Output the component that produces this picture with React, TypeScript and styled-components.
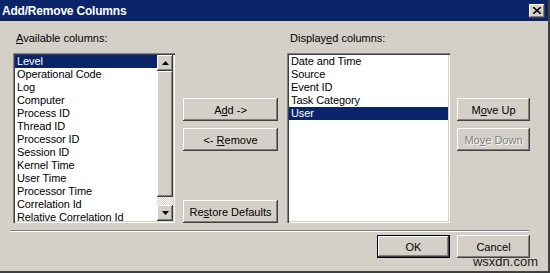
import React from 'react';
import styled, { createGlobalStyle, css } from 'styled-components';

const GlobalStyle = createGlobalStyle`
  html, body {
    margin: 0;
    padding: 0;
    background: #d4d0c8;
  }
  body {
    font-family: "Liberation Sans", Arial, sans-serif;
    font-size: 11px;
    color: #000;
  }
`;

const Window = styled.div`
  position: relative;
  width: 550px;
  height: 273px;
  box-sizing: border-box;
  background: #d4d0c8;
  border-right: 2px solid #404040;
  border-bottom: 2px solid #404040;
  display: flex;
  flex-direction: column;
`;

const TitleBar = styled.div`
  height: 21px;
  background: #0a246a;
  display: flex;
  align-items: center;
  justify-content: space-between;
  padding: 0 3px 0 2px;
`;

const Title = styled.span`
  color: #fff;
  font-weight: bold;
  font-size: 12px;
  letter-spacing: -0.2px;
`;

const CloseButton = styled.div`
  width: 16px;
  height: 14px;
  background: #d4d0c8;
  box-shadow: inset -1px -1px #404040, inset 1px 1px #fff, inset -2px -2px #808080;
  display: flex;
  align-items: center;
  justify-content: center;
`;

const Body = styled.div`
  display: flex;
  padding: 11px 0 0 13px;
`;

const Column = styled.div<{ $width: number; $gap?: number }>`
  width: ${p => p.$width}px;
  margin-right: ${p => p.$gap ?? 0}px;
  display: flex;
  flex-direction: column;
`;

const Label = styled.div`
  height: 13px;
  line-height: 13px;
  margin: 0 0 8px 3px;
  white-space: nowrap;
`;

const ListBox = styled.div`
  height: 170px;
  box-sizing: border-box;
  background: #fff;
  box-shadow: inset 1px 1px #808080, inset 2px 2px #404040, inset -1px -1px #fff, inset -2px -2px #d4d0c8;
  padding: 2px;
  display: flex;
`;

const Items = styled.div`
  flex: 1;
  min-width: 0;
`;

const Item = styled.div<{ $selected?: boolean }>`
  height: 13px;
  line-height: 13px;
  padding-left: 2px;
  white-space: nowrap;
  overflow: hidden;
  letter-spacing: -0.1px;
  ${p =>
    p.$selected &&
    css`
      background: #0a246a;
      color: #fff;
    `}
`;

const ScrollBar = styled.div`
  width: 16px;
  display: flex;
  flex-direction: column;
`;

const raised = css`
  background: #d4d0c8;
  box-shadow: inset -1px -1px #404040, inset 1px 1px #fff, inset -2px -2px #808080, inset 2px 2px #d4d0c8;
`;

const ArrowButton = styled.div`
  ${raised};
  height: 16px;
  display: flex;
  align-items: center;
  justify-content: center;
`;

const Thumb = styled.div`
  ${raised};
  height: 126px;
`;

const Track = styled.div`
  flex: 1;
  background-color: #fff;
  background-image: repeating-conic-gradient(#d4d0c8 0 25%, #fff 0 50%);
  background-size: 2px 2px;
`;

const PushButton = styled.button<{ $default?: boolean }>`
  ${raised};
  width: 100%;
  height: 23px;
  border: none;
  padding: 0;
  font-family: inherit;
  font-size: 11px;
  color: #000;
  box-sizing: border-box;
  ${p =>
    p.$default &&
    css`
      box-shadow: inset 0 0 0 1px #000, inset -2px -2px #404040, inset 2px 2px #fff, inset -3px -3px #808080;
    `}
  &:disabled {
    color: #808080;
    text-shadow: 1px 1px #fff;
  }
`;

const MiddleButtons = styled.div`
  display: flex;
  flex-direction: column;
  gap: 7px;
  margin-top: 66px;
`;

const Spacer = styled.div`
  flex: 1;
`;

const Separator = styled.div`
  margin: 7px 19px 0 10px;
  height: 0;
  border-top: 1px solid #808080;
  border-bottom: 1px solid #fff;
`;

const Footer = styled.div`
  display: flex;
  justify-content: flex-end;
  gap: 7px;
  padding: 3px 18px 0 0;
`;

const FooterSlot = styled.div`
  width: 73px;
`;

const Watermark = styled.div`
  position: absolute;
  right: 10px;
  bottom: 2px;
  font-size: 13px;
  color: #1a1a1a;
`;

const Key = styled.u``;

const available = [
  'Level',
  'Operational Code',
  'Log',
  'Computer',
  'Process ID',
  'Thread ID',
  'Processor ID',
  'Session ID',
  'Kernel Time',
  'User Time',
  'Processor Time',
  'Correlation Id',
  'Relative Correlation Id'
];

const displayed = ['Date and Time', 'Source', 'Event ID', 'Task Category', 'User'];

const Arrow = ({ up }: { up?: boolean }) => (
  <svg width="7" height="4" viewBox="0 0 7 4">
    <path d={up ? 'M3.5 0 L7 4 L0 4 Z' : 'M0 0 L7 0 L3.5 4 Z'} fill="#000" />
  </svg>
);

const App = () => (
  <>
    <GlobalStyle />
    <Window>
      <TitleBar>
        <Title>Add/Remove Columns</Title>
        <CloseButton>
          <svg width="8" height="7" viewBox="0 0 8 7">
            <path d="M0 0 L8 7 M8 0 L0 7" stroke="#000" strokeWidth="1.6" />
          </svg>
        </CloseButton>
      </TitleBar>
      <Body>
        <Column $width={162} $gap={8}>
          <Label>
            <Key>A</Key>vailable columns:
          </Label>
          <ListBox>
            <Items>
              {available.map((name, i) => (
                <Item key={name} $selected={i === 0}>
                  {name}
                </Item>
              ))}
            </Items>
            <ScrollBar>
              <ArrowButton>
                <Arrow up />
              </ArrowButton>
              <Thumb />
              <Track />
              <ArrowButton>
                <Arrow />
              </ArrowButton>
            </ScrollBar>
          </ListBox>
        </Column>
        <Column $width={95} $gap={9}>
          <MiddleButtons>
            <PushButton>
              A<Key>d</Key>d -&gt;
            </PushButton>
            <PushButton>
              &lt;- <Key>R</Key>emove
            </PushButton>
          </MiddleButtons>
          <Spacer />
          <PushButton>
            Re<Key>s</Key>tore Defaults
          </PushButton>
        </Column>
        <Column $width={163} $gap={7}>
          <Label>
            Display<Key>e</Key>d columns:
          </Label>
          <ListBox>
            <Items>
              {displayed.map((name, i) => (
                <Item key={name} $selected={i === displayed.length - 1}>
                  {name}
                </Item>
              ))}
            </Items>
          </ListBox>
        </Column>
        <Column $width={73}>
          <MiddleButtons>
            <PushButton>
              M<Key>o</Key>ve Up
            </PushButton>
            <PushButton disabled>
              Mo<Key>v</Key>e Down
            </PushButton>
          </MiddleButtons>
        </Column>
      </Body>
      <Separator />
      <Footer>
        <FooterSlot>
          <PushButton $default>OK</PushButton>
        </FooterSlot>
        <FooterSlot>
          <PushButton>Cancel</PushButton>
        </FooterSlot>
      </Footer>
      <Watermark>wsxdn.com</Watermark>
    </Window>
  </>
);

export default App;
